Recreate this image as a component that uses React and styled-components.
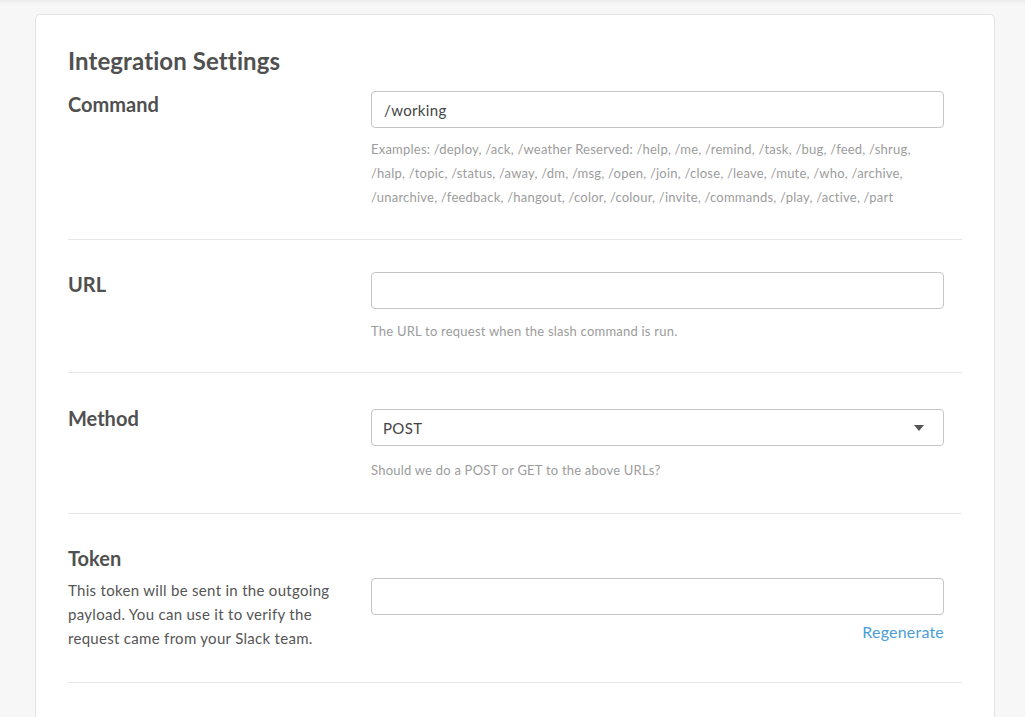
import React, { useState } from 'react';
import styled, { createGlobalStyle } from 'styled-components';

const GlobalStyle = createGlobalStyle`
  html, body {
    margin: 0;
    padding: 0;
    background: #f7f7f7;
    font-family: Lato, "Open Sans", sans-serif;
    -webkit-font-smoothing: antialiased;
  }
  * { box-sizing: border-box; }
`;

export default function App() {
  const [command, setCommand] = useState('/working');
  const [url, setUrl] = useState('');
  const [method, setMethod] = useState('POST');
  const [token, setToken] = useState('');

  return (
    <>
      <GlobalStyle />
      <Page>
        <Card>
          <Title>Integration Settings</Title>

          <Row top={15} bottom={30}>
            <LabelCol>
              <Label>Command</Label>
            </LabelCol>
            <FieldCol>
              <TextInput value={command} onChange={(e) => setCommand(e.target.value)} />
              <Help gap={9}>
                Examples: /deploy, /ack, /weather Reserved: /help, /me, /remind, /task, /bug, /feed, /shrug,
                /halp, /topic, /status, /away, /dm, /msg, /open, /join, /close, /leave, /mute, /who, /archive,
                /unarchive, /feedback, /hangout, /color, /colour, /invite, /commands, /play, /active, /part
              </Help>
            </FieldCol>
          </Row>

          <Row top={32} bottom={29}>
            <LabelCol>
              <Label offset={-1}>URL</Label>
            </LabelCol>
            <FieldCol>
              <TextInput value={url} onChange={(e) => setUrl(e.target.value)} />
              <Help gap={10}>The URL to request when the slash command is run.</Help>
            </FieldCol>
          </Row>

          <Row top={32} bottom={31}>
            <LabelCol>
              <Label>Method</Label>
            </LabelCol>
            <FieldCol offset={4}>
              <SelectWrap>
                <Select value={method} onChange={(e) => setMethod(e.target.value)}>
                  <option>POST</option>
                  <option>GET</option>
                </Select>
                <Caret width='10' height='6' viewBox='0 0 10 6'>
                  <path d='M0 0h10L5 6z' fill='#555' />
                </Caret>
              </SelectWrap>
              <Help gap={12}>Should we do a POST or GET to the above URLs?</Help>
            </FieldCol>
          </Row>

          <Row top={31} bottom={32}>
            <LabelCol>
              <Label>Token</Label>
              <Description>
                This token will be sent in the outgoing payload. You can use it to verify the request came from
                your Slack team.
              </Description>
            </LabelCol>
            <FieldCol offset={33}>
              <TextInput value={token} onChange={(e) => setToken(e.target.value)} />
              <LinkRow>
                <TextLink href='#'>Regenerate</TextLink>
              </LinkRow>
            </FieldCol>
          </Row>
        </Card>
      </Page>
    </>
  );
}

const Page = styled.div`
  min-height: 717px;
  padding: 14px 30px 0 35px;
  box-shadow: inset 0 4px 4px -3px rgba(0, 0, 0, 0.08);
`;

const Card = styled.div`
  width: 960px;
  min-height: 760px;
  padding: 31px 32px 0;
  background: #fff;
  border: 1px solid #e3e3e3;
  border-radius: 5px;
`;

const Title = styled.h2`
  margin: 0;
  font-size: 24px;
  line-height: 30px;
  font-weight: 700;
  letter-spacing: 0.1px;
  color: #505050;
`;

const Row = styled.div`
  display: grid;
  grid-template-columns: 303px 573px;
  align-items: start;
  padding: ${({ top }) => top}px 0 ${({ bottom }) => bottom}px;
  border-bottom: 1px solid #e6e6e6;
`;

const LabelCol = styled.div`
  display: flex;
  flex-direction: column;
`;

const Label = styled.div`
  margin-top: ${({ offset }) => (offset ? `${offset}px` : '0')};
  font-size: 20px;
  line-height: 26px;
  font-weight: 700;
  color: #505050;
`;

const Description = styled.p`
  margin: 7px 0 0;
  width: 275px;
  font-size: 15px;
  line-height: 24px;
  letter-spacing: 0.3px;
  color: #555;
`;

const FieldCol = styled.div`
  display: flex;
  flex-direction: column;
  margin-top: ${({ offset }) => (offset ? `${offset}px` : '0')};
`;

const TextInput = styled.input`
  width: 100%;
  height: 37px;
  padding: 0 12px;
  border: 1px solid #c5c5c5;
  border-radius: 4px;
  font-family: Lato, sans-serif;
  font-size: 15px;
  letter-spacing: 0.35px;
  color: #444;
  outline: none;

  &:focus {
    border-color: #9bc4e4;
  }
`;

const SelectWrap = styled.div`
  position: relative;
  width: 100%;
`;

const Select = styled.select`
  width: 100%;
  height: 37px;
  padding: 0 11px;
  border: 1px solid #c5c5c5;
  border-radius: 4px;
  background: #fff;
  appearance: none;
  font-family: Lato, sans-serif;
  font-size: 15px;
  letter-spacing: 0.35px;
  color: #444;
  outline: none;
`;

const Caret = styled.svg`
  position: absolute;
  right: 20px;
  top: 16px;
  pointer-events: none;
`;

const Help = styled.p`
  margin: ${({ gap }) => gap}px 0 0;
  font-size: 13px;
  line-height: 24px;
  letter-spacing: 0.22px;
  color: #9c9c9c;
`;

const LinkRow = styled.div`
  display: flex;
  justify-content: flex-end;
  margin-top: 6px;
`;

const TextLink = styled.a`
  font-size: 16px;
  line-height: 22px;
  letter-spacing: 0.2px;
  color: #4a9ed8;
  text-decoration: none;

  &:hover {
    text-decoration: underline;
  }
`;
